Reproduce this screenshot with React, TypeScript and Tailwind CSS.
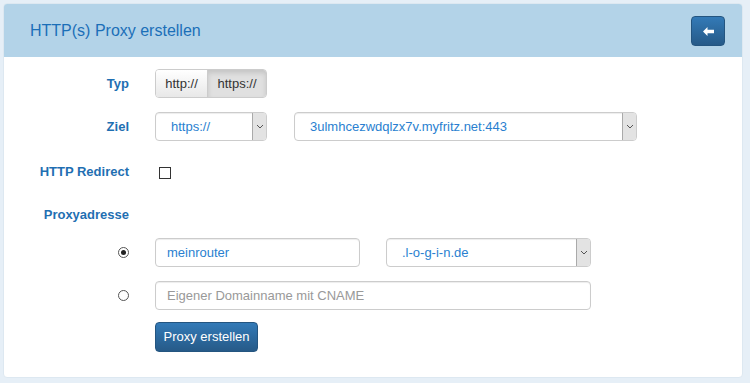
import React from "react";

const Chevron = () => (
  <svg width="8" height="5" viewBox="0 0 8 5" fill="none">
    <path d="M1 1l3 3 3-3" stroke="#555" strokeWidth="1" />
  </svg>
);

const Select = ({ value, width }: { value: string; width: string }) => (
  <div
    className={`${width} h-[29px] flex items-stretch border border-[#ccc] rounded-[4px] bg-white shadow-[inset_0_1px_1px_rgba(0,0,0,0.075)] overflow-hidden`}
  >
    <div className="flex-1 flex items-center pl-[15px] text-[13px] text-[#2a7fd0]">{value}</div>
    <div className="w-[14px] flex items-center justify-center bg-[#e3e3e3] border-l border-[#aaa]">
      <Chevron />
    </div>
  </div>
);

const Label = ({ children }: { children: React.ReactNode }) => (
  <div className="w-[125px] text-right font-bold text-[13px] text-[#1f6fb2]">{children}</div>
);

export default function App() {
  return (
    <div
      className="w-[750px] h-[383px] bg-[#e6eff7] pt-[3px] pl-[3px] pr-[7px] pb-[5px]"
      style={{ fontFamily: '"Liberation Sans", Arial, sans-serif' }}
    >
      <div className="h-full bg-white rounded-[4px] border border-[#dde8f1] overflow-hidden">
        <div className="h-[53px] bg-[#b3d3e8] flex items-center justify-between pl-[26px] pr-[17px]">
          <h1 className="text-[16px] text-[#1b6fb8] mt-[1px]">HTTP(s) Proxy erstellen</h1>
          <button className="w-[34px] h-[30px] mt-[1px] rounded-[4px] border border-[#245580] bg-gradient-to-b from-[#337ab7] to-[#265a88] flex items-center justify-center">
            <svg width="11" height="9" viewBox="0 0 11 9">
              <path d="M0 4.5L4.5 0v2.8H11v3.4H4.5V9z" fill="#fff" />
            </svg>
          </button>
        </div>

        <div className="flex flex-col pt-[12px]">
          <div className="flex items-center gap-[26px] h-[29px]">
            <Label>Typ</Label>
            <div className="flex h-[29px] border border-[#ccc] rounded-[4px] overflow-hidden text-[13px] text-[#333]">
              <div className="w-[52px] flex items-center justify-center bg-gradient-to-b from-white to-[#e8e8e8] border-r border-[#ccc]">
                http://
              </div>
              <div className="w-[58px] flex items-center justify-center bg-[#e0e0e0] shadow-[inset_0_3px_5px_rgba(0,0,0,0.125)]">
                https://
              </div>
            </div>
          </div>

          <div className="flex items-center gap-[26px] h-[29px] mt-[14px]">
            <Label>Ziel</Label>
            <Select value="https://" width="w-[112px]" />
            <Select value="3ulmhcezwdqlzx7v.myfritz.net:443" width="w-[343px] ml-[1px]" />
          </div>

          <div className="flex items-center gap-[30px] h-[29px] mt-[16px]">
            <Label>HTTP Redirect</Label>
            <div className="w-[12px] h-[12px] border border-[#333] bg-white mt-[2px]" />
          </div>

          <div className="flex items-center h-[29px] mt-[14px]">
            <Label>Proxyadresse</Label>
          </div>

          <div className="flex items-center h-[29px] mt-[9px]">
            <div className="w-[125px] flex justify-end">
              <div className="w-[11px] h-[11px] rounded-full border border-[#555] bg-white flex items-center justify-center">
                <div className="w-[5px] h-[5px] rounded-full bg-[#222]" />
              </div>
            </div>
            <div className="ml-[26px] w-[205px] h-[29px] border border-[#ccc] rounded-[4px] flex items-center pl-[11px] text-[13px] text-[#2a7fd0] shadow-[inset_0_1px_1px_rgba(0,0,0,0.075)]">
              meinrouter
            </div>
            <div className="ml-[26px]">
              <Select value=".l-o-g-i-n.de" width="w-[205px]" />
            </div>
          </div>

          <div className="flex items-center h-[29px] mt-[14px]">
            <div className="w-[125px] flex justify-end">
              <div className="w-[11px] h-[11px] rounded-full border border-[#555] bg-white" />
            </div>
            <div className="ml-[26px] w-[436px] h-[29px] border border-[#ccc] rounded-[4px] flex items-center pl-[11px] text-[13px] text-[#999] shadow-[inset_0_1px_1px_rgba(0,0,0,0.075)]">
              Eigener Domainname mit CNAME
            </div>
          </div>

          <div className="flex mt-[12px]">
            <button className="ml-[151px] w-[103px] h-[30px] rounded-[4px] border border-[#245580] bg-gradient-to-b from-[#337ab7] to-[#265a88] text-white text-[13px]">
              Proxy erstellen
            </button>
          </div>
        </div>
      </div>
    </div>
  );
}
